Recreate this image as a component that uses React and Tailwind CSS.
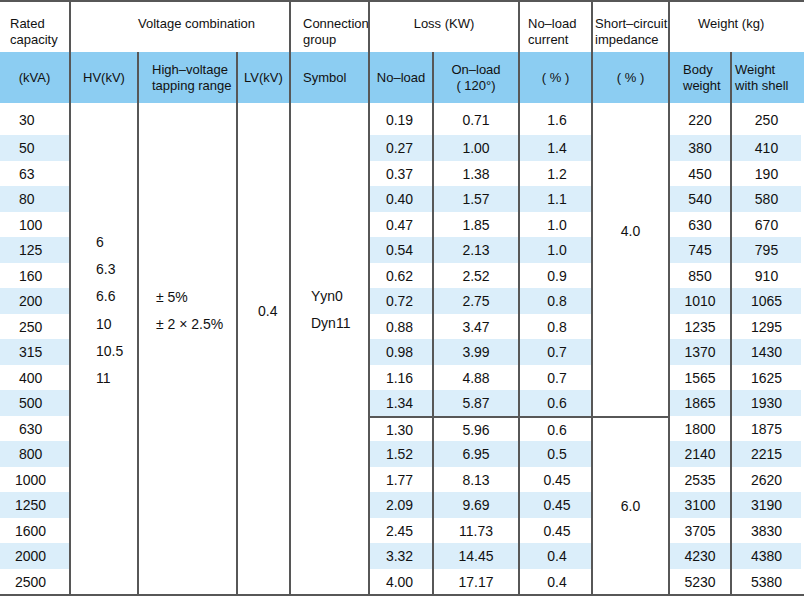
import React from "react";

const rows = [
  ["30", "0.19", "0.71", "1.6", "220", "250"],
  ["50", "0.27", "1.00", "1.4", "380", "410"],
  ["63", "0.37", "1.38", "1.2", "450", "190"],
  ["80", "0.40", "1.57", "1.1", "540", "580"],
  ["100", "0.47", "1.85", "1.0", "630", "670"],
  ["125", "0.54", "2.13", "1.0", "745", "795"],
  ["160", "0.62", "2.52", "0.9", "850", "910"],
  ["200", "0.72", "2.75", "0.8", "1010", "1065"],
  ["250", "0.88", "3.47", "0.8", "1235", "1295"],
  ["315", "0.98", "3.99", "0.7", "1370", "1430"],
  ["400", "1.16", "4.88", "0.7", "1565", "1625"],
  ["500", "1.34", "5.87", "0.6", "1865", "1930"],
  ["630", "1.30", "5.96", "0.6", "1800", "1875"],
  ["800", "1.52", "6.95", "0.5", "2140", "2215"],
  ["1000", "1.77", "8.13", "0.45", "2535", "2620"],
  ["1250", "2.09", "9.69", "0.45", "3100", "3190"],
  ["1600", "2.45", "11.73", "0.45", "3705", "3830"],
  ["2000", "3.32", "14.45", "0.4", "4230", "4380"],
  ["2500", "4.00", "17.17", "0.4", "5230", "5380"],
];

const L = "border-l-2 border-[#575757]";

function DataRow({ r, i }) {
  const stripe = i % 2 === 1 ? "bg-[#dbeefa]" : "";
  const sep = i === 12 ? "border-t-2" : "";
  const first = r[0].length === 4 ? "pl-[15px]" : "pl-[19px]";
  return (
    <>
      <div className={`flex items-center pt-[1px] ${first} ${stripe}`}>{r[0]}</div>
      {i === 0 && (
        <>
          <div className={`${L} row-span-19 pl-[25px] pt-[126px] leading-[27.2px]`}>
            <div>6</div>
            <div>6.3</div>
            <div>6.6</div>
            <div>10</div>
            <div>10.5</div>
            <div>11</div>
          </div>
          <div className={`${L} row-span-19 pl-[17px] pt-[181px] leading-[27px] whitespace-nowrap`}>
            <div>± 5%</div>
            <div>± 2 × 2.5%</div>
          </div>
          <div className={`${L} row-span-19 pl-[20px] pt-[198px] leading-[20px]`}>0.4</div>
          <div className={`${L} row-span-19 pl-[20px] pt-[180px] leading-[27px]`}>
            <div>Yyn0</div>
            <div>Dyn11</div>
          </div>
        </>
      )}
      <div className={`${L} ${sep} flex items-center justify-center pt-[1px] pr-[3px] ${stripe}`}>{r[1]}</div>
      <div className={`${L} ${sep} flex items-center justify-center pt-[1px] ${stripe}`}>{r[2]}</div>
      <div className={`${L} ${sep} flex items-center justify-center pt-[1px] pl-[3px] ${stripe}`}>{r[3]}</div>
      {i === 0 && (
        <div className={`${L} row-span-12 text-center pt-[118px] leading-[20px]`}>4.0</div>
      )}
      {i === 12 && (
        <div className={`${L} border-t-2 row-span-7 flex items-center justify-center`}>6.0</div>
      )}
      <div className={`${L} flex items-center justify-center pt-[1px] ${stripe}`}>{r[4]}</div>
      <div className={`${L} mr-[3px] flex items-center justify-center pt-[1px] ${stripe}`}>{r[5]}</div>
    </>
  );
}

export default function App() {
  const h1 = "pt-[14px] text-[13px] leading-[16px]";
  const h2 = "bg-[#8ccdf2] flex items-center text-[13px] leading-[16px]";
  return (
    <div className="w-[804px] h-[597px] overflow-hidden bg-white text-[#111111] font-['Liberation_Sans',Arial,sans-serif]">
      <div className="grid grid-cols-[69px_68px_99px_53px_79px_64px_86px_73px_77px_62px_74px] grid-rows-[50px_51px_32px_repeat(18,25.5px)] border-y-2 border-[#575757] text-[14px] leading-none">
        {/* header row 1 */}
        <div className={`${h1} pl-[10px]`}>
          Rated
          <br />
          capacity
        </div>
        <div className={`${L} col-span-3 ${h1} pl-[67px]`}>Voltage combination</div>
        <div className={`${L} ${h1} pl-[12px] whitespace-nowrap`}>
          Connection
          <br />
          group
        </div>
        <div className={`${L} col-span-2 ${h1} text-center`}>Loss (KW)</div>
        <div className={`${L} ${h1} pl-[8px]`}>
          No–load
          <br />
          current
        </div>
        <div className={`${L} ${h1} pl-[2px] whitespace-nowrap`}>
          Short–circuit
          <br />
          impedance
        </div>
        <div className={`${L} col-span-2 ${h1} pl-[28px]`}>Weight (kg)</div>

        {/* header row 2 */}
        <div className={`${h2} justify-center`}>(kVA)</div>
        <div className={`${L} ${h2} justify-center`}>HV(kV)</div>
        <div className={`${L} ${h2} pl-[13px]`}>
          <div>
            High–voltage
            <br />
            tapping range
          </div>
        </div>
        <div className={`${L} ${h2} justify-center`}>LV(kV)</div>
        <div className={`${L} ${h2} pl-[12px]`}>Symbol</div>
        <div className={`${L} ${h2} justify-center`}>No–load</div>
        <div className={`${L} ${h2} justify-center text-center`}>
          <div>
            On–load
            <br />( 120°)
          </div>
        </div>
        <div className={`${L} ${h2} justify-center`}>( % )</div>
        <div className={`${L} ${h2} justify-center`}>( % )</div>
        <div className={`${L} ${h2} pl-[13px]`}>
          <div>
            Body
            <br />
            weight
          </div>
        </div>
        <div className={`${L} ${h2} pl-[3px]`}>
          <div>
            Weight
            <br />
            with shell
          </div>
        </div>

        {rows.map((r, i) => (
          <DataRow key={i} r={r} i={i} />
        ))}
      </div>
    </div>
  );
}
